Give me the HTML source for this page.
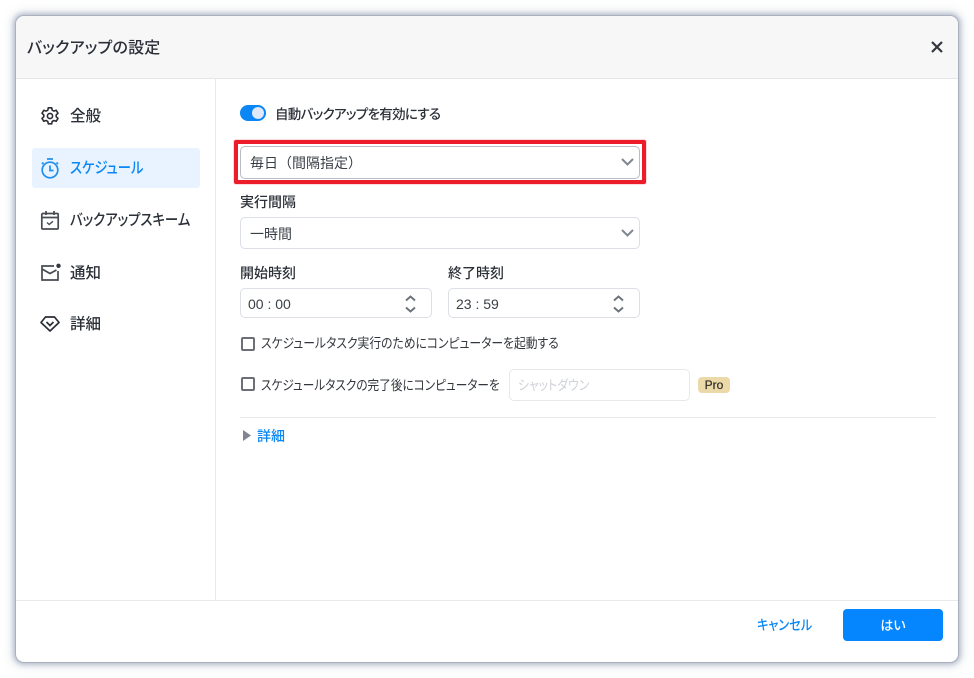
<!DOCTYPE html>
<html lang="ja"><head><meta charset="utf-8">
<style>
html,body{margin:0;padding:0;width:974px;height:678px;overflow:hidden;background:#fff}
body{font-family:"Liberation Sans","Noto Sans CJK JP",sans-serif;color:#2b3038;font-size:14px;position:relative;font-feature-settings:"palt"}
.a{position:absolute;white-space:nowrap;line-height:20px}
.win{position:absolute;left:16px;top:16px;width:942px;height:646px;background:#fff;border-radius:8px;box-shadow:0 0 0 1px #aab0bd,0 0 4px 3px rgba(150,160,180,.55),0 0 10px 5px rgba(170,180,200,.3)}
.head{position:absolute;left:16px;top:16px;width:942px;height:62px;background:#f7f7f8;border-radius:8px 8px 0 0;border-bottom:1px solid #e4e6ea}
.box{position:absolute;box-sizing:border-box;background:#fff;border:1px solid #dcdfe6;border-radius:5px}
.cb{position:absolute;box-sizing:border-box;width:14px;height:14px;border:2px solid #6a6f78;border-radius:2px;left:241px}
svg{position:absolute;overflow:visible}
.nav{font-weight:500;font-size:15.500px}
.lbl{font-weight:500;font-size:14px}
.sq{transform-origin:0 50%}
</style></head><body>
<div class="win"></div>
<div class="head"></div>
<div class="a" style="left:27px;top:38px;font-size:16px;line-height:22px;font-weight:500;letter-spacing:.2px">バックアップの設定</div>
<svg style="left:930px;top:40px" width="14" height="14" fill="none" stroke="#33373d" stroke-width="2.2"><path d="M2 2L12 12M12 2L2 12"/></svg>

<div style="position:absolute;left:215px;top:79px;width:1px;height:521px;background:#e8e9ed"></div>
<div style="position:absolute;left:16px;top:600px;width:942px;height:1px;background:#e8e9ed"></div>

<div style="position:absolute;left:32px;top:148px;width:168px;height:40px;background:#e8f3ff;border-radius:3px"></div>

<svg style="left:41px;top:107px" width="18" height="18" fill="none" stroke="#2b2f35" stroke-width="1.600"><path d="M7.300 0.800h3.400l.5 2.400 1.700.9 2.300-.8 1.800 3-1.800 1.600v1.800l1.800 1.600-1.800 3-2.300-.8-1.700.9-.5 2.400H7.300l-.5-2.400-1.700-.9-2.300.8-1.800-3 1.800-1.600V8L1 6.300l1.800-3 2.300.8 1.700-.9z" stroke-linejoin="round"/><circle cx="9" cy="9" r="2.600"/></svg>
<div class="a nav" style="left:70px;top:107px">全般</div>

<svg style="left:41px;top:158px" width="18" height="21" fill="none" stroke="#1e8fee" stroke-width="1.700"><path d="M6 1h6"/><circle cx="9" cy="12" r="7.800"/><path d="M9 7.500v5h3.500M2.500 4.500L1 6M15.500 4.500L17 6"/></svg>
<div class="a nav sq" style="left:70px;top:159px;color:#0a87f5;transform:scaleX(.86)">スケジュール</div>

<svg style="left:41px;top:211px" width="18" height="19" fill="none" stroke="#474b52" stroke-width="1.700"><rect x="0.800" y="2.500" width="16.400" height="15.500" rx="1"/><path d="M5 0v4M13 0v4"/><path d="M0.800 6.500h16.400"/><path d="M6 11.500l2.200 2 3.800-3.200" stroke-width="1.400"/></svg>
<div class="a nav sq" style="left:70px;top:211px;transform:scaleX(.863)">バックアップスキーム</div>

<svg style="left:41px;top:264px" width="20" height="17" fill="none" stroke="#474b52" stroke-width="1.700"><path d="M13 2H1v14h16V7"/><path d="M1 5l8 4.500L15.500 6"/><circle cx="17.500" cy="1.800" r="2.200" fill="#33373d" stroke="none"/></svg>
<div class="a nav" style="left:70px;top:264px">通知</div>

<svg style="left:40px;top:316px" width="20" height="16" fill="none" stroke="#2b2f35" stroke-width="1.700"><path d="M5.500 1h9L19 6.500 10 15 1 6.500z" stroke-linejoin="round"/><path d="M6.500 6l3.500 3.500L13.500 6"/></svg>
<div class="a nav" style="left:70px;top:315px">詳細</div>

<div style="position:absolute;left:240px;top:105px;width:26px;height:16px;background:#0a87f5;border-radius:8px"></div>
<div style="position:absolute;left:252px;top:107px;width:12px;height:12px;background:#dfe9f7;border-radius:50%"></div>
<div class="a" style="left:275px;top:105px;font-size:13.500px;font-weight:500;letter-spacing:-.7px">自動バックアップを有効にする</div>

<div style="position:absolute;box-sizing:border-box;left:234px;top:140px;width:412px;height:44px;border:4px solid #ec1c2b;border-radius:2px;box-shadow:0 0 1px #ec1c2b"></div>
<div class="box" style="left:240px;top:146px;width:400px;height:33px;border-color:#b9bcc6"></div>
<div class="a" style="left:250px;top:153px;font-size:14px;color:#3a3f47;font-feature-settings:normal">毎日（間隔指定）</div>
<svg style="left:621px;top:158px" width="13" height="8" fill="none" stroke="#80858f" stroke-width="2"><path d="M1 1l5.500 5.500L12 1"/></svg>

<div class="a lbl" style="left:240px;top:192px">実行間隔</div>
<div class="box" style="left:240px;top:217px;width:400px;height:32px"></div>
<div class="a" style="left:250px;top:224px;font-size:14px;color:#3a3f47">一時間</div>
<svg style="left:621px;top:229px" width="13" height="8" fill="none" stroke="#80858f" stroke-width="2"><path d="M1 1l5.500 5.500L12 1"/></svg>

<div class="a lbl" style="left:240px;top:263px">開始時刻</div>
<div class="a lbl" style="left:448px;top:263px">終了時刻</div>
<div class="box" style="left:240px;top:288px;width:192px;height:30px"></div>
<div class="box" style="left:448px;top:288px;width:192px;height:30px"></div>
<div class="a" style="left:248px;top:294px;font-size:14px;color:#3a3f47">00 : 00</div>
<div class="a" style="left:456px;top:294px;font-size:14px;color:#3a3f47">23 : 59</div>
<svg style="left:405px;top:295px" width="11" height="18" fill="none" stroke="#6b7079" stroke-width="1.900"><path d="M1 5.500L5.500 1.500 10 5.500M1 12.500L5.500 16.500 10 12.500"/></svg>
<svg style="left:613px;top:295px" width="11" height="18" fill="none" stroke="#6b7079" stroke-width="1.900"><path d="M1 5.500L5.500 1.500 10 5.500M1 12.500L5.500 16.500 10 12.500"/></svg>

<div class="cb" style="top:337px"></div>
<div class="a sq" style="left:261px;top:334px;font-size:13.500px;color:#33373d;transform:scaleX(.874)">スケジュールタスク実行のためにコンピューターを起動する</div>
<div class="cb" style="top:377px"></div>
<div class="a sq" style="left:261px;top:376px;font-size:13.500px;color:#33373d;transform:scaleX(.863)">スケジュールタスクの完了後にコンピューターを</div>
<div class="box" style="left:509px;top:369px;width:181px;height:32px;border-color:#e6e8ec"></div>
<div class="a sq" style="left:518px;top:376px;font-size:13.500px;color:#cfd2d8;transform:scaleX(.88)">シャットダウン</div>
<div class="a" style="left:698px;top:377px;width:32px;height:16px;line-height:16px;background:#ecd9a8;border-radius:4px;text-align:center;font-size:12px;color:#33302a;-webkit-text-stroke:.25px #33302a">Pro</div>

<div style="position:absolute;left:240px;top:417px;width:696px;height:1px;background:#e8e9ed"></div>
<svg style="left:243px;top:430px" width="8" height="11"><path d="M0 0L8 5.500 0 11z" fill="#80858f"/></svg>
<div class="a" style="left:257px;top:426px;font-size:14px;font-weight:500;color:#0a87f5">詳細</div>

<div class="a sq" style="left:757px;top:615px;font-size:14px;font-weight:500;color:#0a87f5;transform:scaleX(.87)">キャンセル</div>
<div class="a" style="left:843px;top:610px;width:100px;height:32px;line-height:32px;background:transparent;text-align:center;color:#fff;font-size:13px;font-weight:500;z-index:2">はい</div>
<div style="position:absolute;left:843px;top:609px;width:100px;height:32px;background:#0586ff;border-radius:4px"></div>
</body></html>
